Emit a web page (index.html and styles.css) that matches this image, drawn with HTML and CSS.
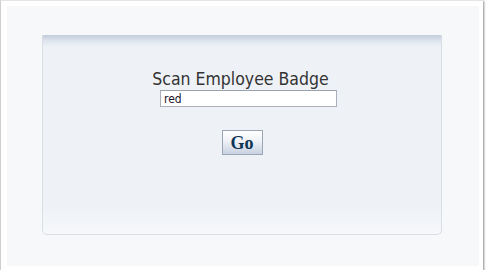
FILE: index.html
```html
<!DOCTYPE html>
<html>
<head>
<meta charset="utf-8">
<link rel="stylesheet" href="styles.css">
</head>
<body>
<div class="frame">
  <div class="inner">
    <div class="panel">
      <div class="content">
        <div class="title">Scan Employee Badge</div>
        <input class="badge" type="text" value="red">
        <button class="go">Go</button>
      </div>
    </div>
  </div>
</div>
</body>
</html>
```
FILE: styles.css
```css
html, body {
  margin: 0;
  padding: 0;
  background: #ffffff;
}
.frame {
  width: 483px;
  height: 270px;
  box-sizing: border-box;
  background: #ffffff;
  border-left: 1px solid #cfcfcf;
  border-top: 1px solid #e4e4e4;
  box-shadow: 1px 1px 2px rgba(0,0,0,0.45);
  padding: 5px 4px 4px 6px;
}
.inner {
  background: #f7f8fa;
  height: 100%;
  padding-top: 29px;
  padding-left: 35px;
  box-sizing: border-box;
}
.panel {
  width: 400px;
  height: 200px;
  box-sizing: border-box;
  border: 1px solid #d9dde4;
  border-top: none;
  border-radius: 0 0 5px 5px;
  background: linear-gradient(to bottom, #c3ccdb 0px, #dfe5ee 6px, #eef2f6 12px, #eef2f6 170px, #f5f7fa 196px, #f7f8fa 200px);
}
.content {
  display: flex;
  flex-direction: column;
  align-items: center;
  padding-top: 34px;
}
.title {
  font-family: "DejaVu Sans Condensed", "DejaVu Sans", sans-serif;
  font-stretch: condensed;
  font-size: 17.5px;
  color: #333333;
  line-height: 21px;
  margin-left: -3px;
}
.badge {
  width: 177px;
  height: 17px;
  box-sizing: border-box;
  border: 1px solid #a9b0bc;
  border-top-color: #9aa2ae;
  background: #ffffff;
  font-family: "DejaVu Sans Condensed", "DejaVu Sans", sans-serif;
  font-stretch: condensed;
  font-size: 12px;
  color: #22162e;
  padding: 0 3px;
  margin-left: 13px;
  outline: none;
}
.go {
  margin-top: 23px;
  width: 41px;
  height: 25px;
  box-sizing: border-box;
  border: 1px solid #9da6b4;
  background: linear-gradient(to bottom, #ffffff 0%, #eef1f6 45%, #c9d2e2 100%);
  font-family: "Liberation Serif", serif;
  font-weight: bold;
  font-size: 18px;
  color: #0e3553;
  padding: 0;
  line-height: 22px;
  margin-left: 0;
}
```
